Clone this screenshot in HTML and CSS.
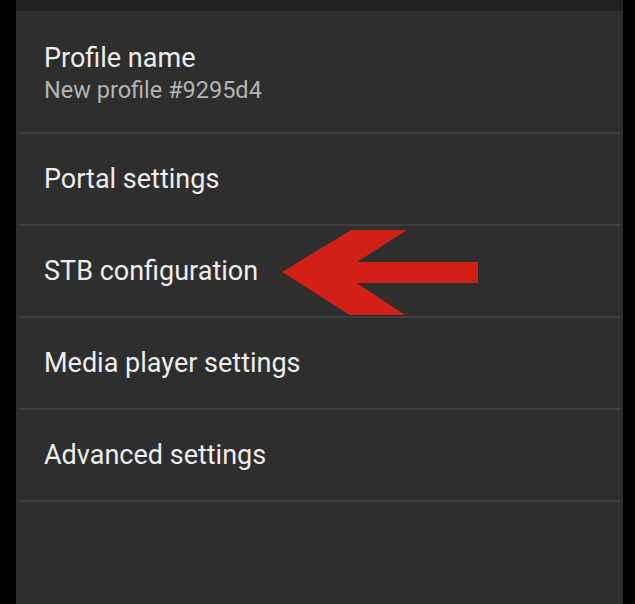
FILE: index.html
```html
<!DOCTYPE html>
<html>
<head>
<meta charset="utf-8">
<link rel="stylesheet" href="styles.css">
</head>
<body>
<div class="screen">
  <div class="panel">
    <div class="topstrip"></div>
    <div class="list">
      <div class="row row-first">
        <div class="title">Profile name</div>
        <div class="subtitle">New profile #9295d4</div>
      </div>
      <div class="row"><div class="title">Portal settings</div></div>
      <div class="row"><div class="title">STB configuration</div></div>
      <div class="row"><div class="title">Media player settings</div></div>
      <div class="row"><div class="title">Advanced settings</div></div>
    </div>
    <svg class="arrow" width="635" height="604" viewBox="0 0 635 604">
      <polygon points="282,272 351,230 407,230 357,262 478,262 478,283 357,283 405,315 350,315" fill="#d21f18"/>
    </svg>
  </div>
</div>
</body>
</html>
```
FILE: styles.css
```css
html, body {
  margin: 0;
  padding: 0;
  background: #000;
}
.screen {
  width: 635px;
  height: 604px;
  display: flex;
  background: #000;
  overflow: hidden;
}
.panel {
  margin-left: 16px;
  width: 607px;
  height: 604px;
  background: #2d2e2d;
  display: flex;
  flex-direction: column;
  font-family: Roboto, "Noto Sans", sans-serif;
}
.topstrip {
  height: 11px;
  background: #1f201f;
  flex: none;
}
.list {
  display: flex;
  flex-direction: column;
}
.row {
  height: 90px;
  border-bottom: 2px solid #3e3f3e;
  margin: 0 3px 0 4px;
  padding-left: 24px;
  display: flex;
  flex-direction: column;
  justify-content: center;
}
.row-first {
  height: 123px;
  gap: 2px;
  padding-top: 2px;
  box-sizing: border-box;
}
.title {
  color: #ededed;
  font-size: 27px;
  line-height: 32px;
}
.subtitle {
  color: #b4b4b4;
  font-size: 23.5px;
  line-height: 28px;
}
.arrow {
  position: absolute;
  left: 0;
  top: 0;
}
```
